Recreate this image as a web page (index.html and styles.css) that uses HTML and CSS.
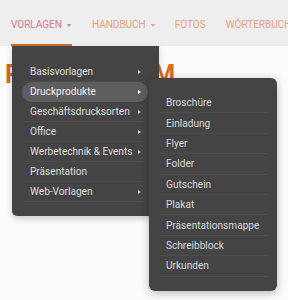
FILE: index.html
```html
<!DOCTYPE html>
<html lang="de">
<head>
<meta charset="utf-8">
<title>Vorlagen</title>
<link rel="stylesheet" href="styles.css">
</head>
<body>
<div class="page">
  <nav class="nav">
    <div class="nav-item active">VORLAGEN <span class="caret"></span></div>
    <div class="nav-item">HANDBUCH <span class="caret"></span></div>
    <div class="nav-item">FOTOS</div>
    <div class="nav-item">WÖRTERBUCH</div>
  </nav>
  <div class="hero">
    <h1 class="hero-title">PREMIUM</h1>
  </div>

  <ul class="menu">
    <li class="menu-item">Basisvorlagen <span class="arrow"></span></li>
    <li class="menu-item current">Druckprodukte <span class="arrow"></span></li>
    <li class="menu-item">Geschäftsdrucksorten <span class="arrow"></span></li>
    <li class="menu-item">Office <span class="arrow"></span></li>
    <li class="menu-item">Werbetechnik &amp; Events <span class="arrow"></span></li>
    <li class="menu-item">Präsentation</li>
    <li class="menu-item">Web-Vorlagen <span class="arrow"></span></li>
  </ul>

  <ul class="submenu">
    <li class="sub-item">Broschüre</li>
    <li class="sub-item">Einladung</li>
    <li class="sub-item">Flyer</li>
    <li class="sub-item">Folder</li>
    <li class="sub-item">Gutschein</li>
    <li class="sub-item">Plakat</li>
    <li class="sub-item">Präsentationsmappe</li>
    <li class="sub-item">Schreibblock</li>
    <li class="sub-item">Urkunden</li>
  </ul>
</div>
</body>
</html>
```
FILE: styles.css
```css
* { box-sizing: border-box; margin: 0; padding: 0; }
html, body { width: 288px; height: 300px; overflow: hidden; }
body {
  background: #fbfbfb;
  font-family: Roboto, "Liberation Sans", sans-serif;
}
.page { position: relative; width: 288px; height: 300px; }

.nav {
  display: flex;
  gap: 20px;
  height: 46px;
  padding: 0 0 0 11px;
  background: #eeeeee;
  white-space: nowrap;
  overflow: hidden;
}
.nav-item {
  display: flex;
  align-items: flex-start;
  flex-shrink: 0;
  padding-top: 19px;
  font-size: 10px;
  line-height: 12px;
  color: #e2a27e;
  border-bottom: 2px solid transparent;
}
.nav-item.active {
  color: #d67886;
  border-bottom-color: #cf6a2c;
  padding-right: 1px;
}
.caret {
  width: 0;
  height: 0;
  margin: 5px 0 0 5px;
  border-left: 2.5px solid transparent;
  border-right: 2.5px solid transparent;
  border-top: 3px solid currentColor;
}

.hero { padding: 14px 0 0 5px; }
.hero-title {
  font-size: 25px;
  font-weight: 700;
  line-height: 29px;
  letter-spacing: 9.4px;
  color: #d9691f;
}

.menu, .submenu { list-style: none; position: absolute; background: #444444; }
.menu {
  left: 12px;
  top: 46px;
  width: 147px;
  padding: 16px 11px 14px 10px;
  border-radius: 0 0 5px 5px;
  box-shadow: 0 3px 6px rgba(0, 0, 0, 0.18);
}
.menu-item, .sub-item {
  position: relative;
  display: flex;
  align-items: center;
  justify-content: space-between;
  font-size: 10.1px;
  line-height: 20px;
  color: #dedede;
  white-space: nowrap;
}
.menu-item { height: 20px; padding: 0 7px 0 8px; }
.menu-item::after, .sub-item::after {
  content: "";
  position: absolute;
  left: 2px;
  right: 3px;
  bottom: 0;
  height: 1px;
  background: #4d4d4d;
}
.menu-item.current {
  background: #5e5e5e;
  border-radius: 10px;
  color: #f0f0f0;
}
.menu-item.current::after { display: none; }
.arrow {
  width: 0;
  height: 0;
  border-top: 2.5px solid transparent;
  border-bottom: 2.5px solid transparent;
  border-left: 3px solid #cfcfcf;
}
.current .arrow { border-left-color: #ffffff; }

.submenu {
  left: 149px;
  top: 78px;
  width: 128px;
  padding: 15px 7px 14px 8px;
  border-radius: 6px;
  box-shadow: 0 2px 8px rgba(0, 0, 0, 0.28);
}
.sub-item { height: 20.4px; padding: 0 9px; color: #d9d9d9; }
.sub-item::after { left: 3px; right: 2px; }
```
